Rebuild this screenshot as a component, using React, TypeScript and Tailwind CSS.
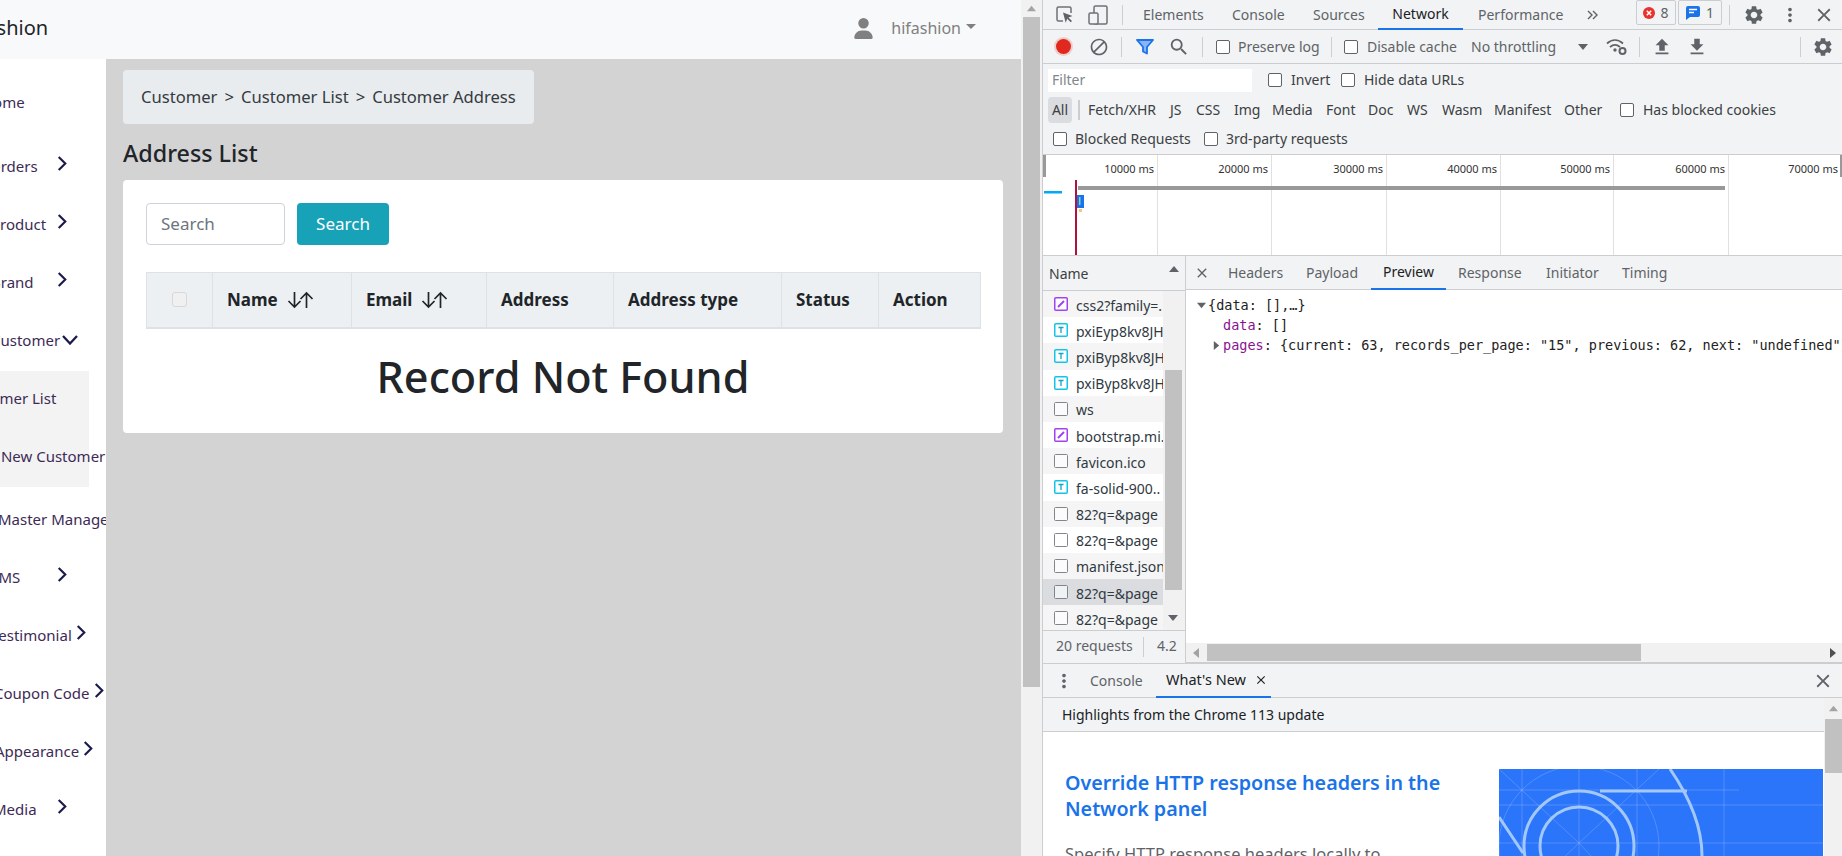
import type { ReactNode } from "react";
import { MdBlock, MdClose, MdFileDownload, MdFileUpload, MdMoreVert, MdSearch, MdSettings } from "react-icons/md";

function Tri({ dir, className }: { dir: "up" | "down" | "left" | "right"; className?: string }) {
  const pts = {
    up: "0,8 5,2 10,8",
    down: "0,2 5,8 10,2",
    left: "8,0 2,5 8,10",
    right: "2,0 8,5 2,10",
  }[dir];
  return (
    <svg viewBox="0 0 10 10" className={className}>
      <polygon points={pts} fill="currentColor" />
    </svg>
  );
}

function ChevronRight({ className }: { className?: string }) {
  return (
    <svg viewBox="0 0 10 16" className={"h-[15px] w-[10px] shrink-0 text-[#1a1a4d] " + (className ?? "")}>
      <polyline points="1.5,1 8.5,8 1.5,15" fill="none" stroke="currentColor" strokeWidth="2.3" />
    </svg>
  );
}

function SortArrows() {
  return (
    <svg viewBox="0 0 27 18" className="ml-[8px] h-[18px] w-[28px]">
      <g fill="none" stroke="#212529" strokeWidth="1.7">
        <path d="M8 1v15M2 10l6 6 6-6" />
        <path d="M20 17V2M14 8l6-6 6 6" />
      </g>
    </svg>
  );
}

const navTop = [
  { label: "Orders", offset: "-ml-[11px]" },
  { label: "Product", offset: "-ml-[9px]" },
  { label: "Brand", offset: "-ml-[9px]" },
];

const navBottom = [
  { label: "CMS", offset: "-ml-[11px]" },
  { label: "Testimonial", offset: "-ml-[9px]" },
  { label: "Coupon Code", offset: "-ml-[6px]" },
  { label: "Appearance", offset: "-ml-[5px]" },
  { label: "Media", offset: "-ml-[7px]" },
  { label: "Settings", offset: "-ml-[7px]" },
];

function NavRow({ label, offset }: { label: string; offset: string }) {
  return (
    <div className="flex h-[58px] items-center whitespace-nowrap">
      <div className="min-w-[53px]">
        <div className={offset}>{label}</div>
      </div>
      <ChevronRight className="mb-[6px] ml-[4px]" />
    </div>
  );
}

function Sidebar() {
  return (
    <aside className="h-full w-[106px] shrink-0 overflow-hidden bg-white pt-[14px] text-[15px] text-[#3d2b56]">
      <div className="mb-[6px] -ml-[18px] flex h-[58px] items-center">Home</div>
      {navTop.map((n) => (
        <NavRow key={n.label} {...n} />
      ))}
      <div className="flex h-[58px] items-center whitespace-nowrap">
        <span className="-ml-[9px]">Customer</span>
        <svg viewBox="0 0 16 10" className="ml-[2px] h-[10px] w-[16px] shrink-0 text-[#1a1a4d]">
          <polyline points="1,1 8,8.5 15,1" fill="none" stroke="currentColor" strokeWidth="2.3" />
        </svg>
      </div>
      <div className="mt-[2px] w-[89px] bg-[#f3f3f3] whitespace-nowrap">
        <div className="flex h-[58px] items-center pb-[4px]">
          <span className="-ml-[41px]">Customer List</span>
        </div>
        <div className="flex h-[58px] items-center pb-[4px]">
          <span className="-ml-[31px]">Add New Customer</span>
        </div>
      </div>
      <div className="mt-[3px] flex h-[58px] items-center whitespace-nowrap">
        <span className="-ml-[2px]">Master Management</span>
      </div>
      {navBottom.map((n) => (
        <NavRow key={n.label} {...n} />
      ))}
    </aside>
  );
}

function PageContent() {
  return (
    <main className="h-full min-w-0 flex-1 bg-[#d3d3d3] pt-[11px] pl-[17px]">
      <div className="flex h-[54px] w-[411px] items-center gap-[7px] rounded-[4px] bg-[#e9ecef] pl-[18px] text-[16.6px] text-[#343a40]">
        <span>Customer</span>
        <span>&gt;</span>
        <span>Customer List</span>
        <span>&gt;</span>
        <span>Customer Address</span>
      </div>
      <h2 className="mt-[13px] h-[43px] text-[23.3px] leading-[33px] font-medium text-[#212529]">Address List</h2>
      <section className="h-[253px] w-[880px] rounded-[4px] bg-white px-[23px] pt-[23px]">
        <div className="flex gap-[12px]">
          <div className="flex h-[42px] w-[139px] items-center rounded-[4px] border border-[#ced4da] pl-[14px] text-[17px] text-[#6c757d]">
            Search
          </div>
          <div className="flex h-[42px] w-[92px] items-center justify-center rounded-[4px] bg-[#17a2b8] text-[17px] text-white">
            Search
          </div>
        </div>
        <div className="mt-[27px] flex h-[57px] w-[835px] border border-b-2 border-[#dee2e6] bg-[#ecf0f2] text-[17px] font-bold text-[#212529]">
          <div className="flex w-[66px] items-center justify-center border-r border-[#dee2e6]">
            <div className="mr-[1px] mb-[1px] h-[15px] w-[15px] rounded-[3px] border border-[#d8d8d8] bg-[#f0f0f0]" />
          </div>
          <div className="flex w-[139px] items-center border-r border-[#dee2e6] pl-[14px]">
            Name
            <SortArrows />
          </div>
          <div className="flex w-[135px] items-center border-r border-[#dee2e6] pl-[14px]">
            Email
            <SortArrows />
          </div>
          <div className="flex w-[127px] items-center border-r border-[#dee2e6] pl-[14px]">Address</div>
          <div className="flex w-[168px] items-center border-r border-[#dee2e6] pl-[14px]">Address type</div>
          <div className="flex w-[97px] items-center border-r border-[#dee2e6] pl-[14px]">Status</div>
          <div className="flex flex-1 items-center pl-[14px]">Action</div>
        </div>
        <h1 className="mt-[21px] text-center text-[43.2px] leading-[53px] font-medium text-[#212529]">Record Not Found</h1>
      </section>
    </main>
  );
}

function PageScrollbar() {
  return (
    <div className="h-full w-[21px] shrink-0 bg-[#f1f1f1] pl-[2px]">
      <div className="flex h-[17px] w-[17px] items-center justify-center text-[#a3a3a3]">
        <Tri dir="up" className="h-[9px] w-[9px]" />
      </div>
      <div className="h-[670px] w-[17px] bg-[#c1c1c1]" />
    </div>
  );
}

function Check({ className }: { className?: string }) {
  return <div className={"h-[14px] w-[14px] shrink-0 rounded-[2px] border border-[#5f6368] bg-white " + (className ?? "")} />;
}

function Sep({ className }: { className?: string }) {
  return <div className={"h-[20px] w-px shrink-0 bg-[#ccced2] " + (className ?? "")} />;
}

function MainTabs() {
  return (
    <div className="flex h-[30px] shrink-0 items-center border-b border-[#cbcdd1] text-[14px] text-[#5f6368]">
      <svg viewBox="0 0 17 17" className="ml-[13px] h-[17px] w-[17px]">
        <path d="M7 15H2.5A1.5 1.5 0 0 1 1 13.5v-11A1.5 1.5 0 0 1 2.5 1h11A1.5 1.5 0 0 1 15 2.500V7" fill="none" stroke="#6e7175" strokeWidth="1.5" />
        <path d="M7 6.500l9.500 3.500-4 1.500 3.500 3.500-1.300 1.300-3.500-3.500-1.500 4z" fill="#5f6368" />
      </svg>
      <svg viewBox="0 0 20 20" className="ml-[15px] h-[20px] w-[20px]">
        <rect x="6" y="1" width="13" height="18" rx="1.500" fill="none" stroke="#6e7175" strokeWidth="1.500" />
        <rect x="1" y="8" width="9" height="11" rx="1.500" fill="#f1f3f4" stroke="#6e7175" strokeWidth="1.500" />
      </svg>
      <Sep className="ml-[14px]" />
      <div className="ml-[20px] w-[89px] pb-[1px]">Elements</div>
      <div className="w-[81px] pb-[1px]">Console</div>
      <div className="w-[65px] pb-[1px]">Sources</div>
      <div className="flex h-[30px] w-[85px] items-center justify-center border-b-2 border-[#1a73e8] pb-[1px] text-[#202124]">Network</div>
      <div className="ml-[15px] w-[109px] pb-[1px]">Performance</div>
      <svg viewBox="0 0 12 10" className="h-[10px] w-[12px]">
        <path d="M1 1l4 4-4 4M6 1l4 4-4 4" fill="none" stroke="#5f6368" strokeWidth="1.400" />
      </svg>
      <div className="ml-[37px] flex h-[25px] w-[40px] items-center justify-center gap-[5px] self-start rounded-[2px] border border-[#cbcdd1]">
        <svg viewBox="0 0 12 12" className="h-[12px] w-[12px]">
          <circle cx="6" cy="6" r="6" fill="#e8322b" />
          <path d="M3.800 3.800l4.400 4.400M8.200 3.800l-4.400 4.400" stroke="#fff" strokeWidth="1.500" />
        </svg>
        8
      </div>
      <div className="ml-[2px] flex h-[25px] w-[44px] items-center justify-center gap-[6px] self-start rounded-[2px] border border-[#cbcdd1]">
        <svg viewBox="0 0 14 14" className="h-[14px] w-[14px]">
          <path d="M2 0h10a2 2 0 0 1 2 2v7a2 2 0 0 1-2 2H4l-4 3V2a2 2 0 0 1 2-2z" fill="#1a73e8" />
          <path d="M3 3.500h8M3 6.500h5" stroke="#fff" strokeWidth="1.300" />
        </svg>
        1
      </div>
      <Sep className="ml-[7px]" />
      <MdSettings className="ml-[13px] h-[22px] w-[22px] text-[#5f6368]" />
      <MdMoreVert className="ml-[14px] h-[22px] w-[22px] text-[#5f6368]" />
      <MdClose className="ml-[12px] h-[22px] w-[22px] text-[#5f6368]" />
    </div>
  );
}

function NetToolbar() {
  return (
    <div className="flex h-[34px] shrink-0 items-center border-b border-[#cbcdd1] text-[14px] text-[#5f6368]">
      <div className="ml-[13px] h-[15px] w-[15px] shrink-0 rounded-full bg-[#e0281e] shadow-[0_0_0_2px_rgba(224,40,30,0.18)]" />
      <MdBlock className="ml-[18px] h-[20px] w-[20px] shrink-0 text-[#5f6368]" />
      <Sep className="ml-[12px]" />
      <svg viewBox="0 0 18 16" className="ml-[14px] h-[16px] w-[18px] shrink-0">
        <path d="M1 1h16l-6 7v6.500l-4-2V8z" fill="#8ab4f8" stroke="#1a73e8" strokeWidth="1.800" strokeLinejoin="round" />
      </svg>
      <MdSearch className="ml-[14px] h-[22px] w-[22px] shrink-0 text-[#5f6368]" />
      <Sep className="ml-[12px]" />
      <Check className="ml-[13px]" />
      <div className="ml-[8px] w-[93px] shrink-0">Preserve log</div>
      <Sep />
      <Check className="ml-[12px]" />
      <div className="ml-[9px] w-[104px] shrink-0">Disable cache</div>
      <div className="w-[103px] shrink-0">No throttling</div>
      <Tri dir="down" className="ml-[4px] h-[10px] w-[10px] shrink-0" />
      <svg viewBox="0 0 22 17" className="ml-[18px] h-[17px] w-[22px] shrink-0">
        <g fill="none" stroke="#5f6368" strokeWidth="1.800">
          <path d="M1 5.500C6 1 12 1 17 5.500" />
          <path d="M4 9c3.500-3 6.500-3 10 0" />
        </g>
        <circle cx="9" cy="12" r="1.700" fill="#5f6368" />
        <circle cx="16.500" cy="13" r="3" fill="none" stroke="#5f6368" strokeWidth="2" />
      </svg>
      <Sep className="ml-[11px]" />
      <MdFileUpload className="ml-[11px] h-[22px] w-[22px] shrink-0 text-[#5f6368]" />
      <MdFileDownload className="ml-[13px] h-[22px] w-[22px] shrink-0 text-[#5f6368]" />
      <Sep className="ml-[92px]" />
      <MdSettings className="ml-[11px] h-[22px] w-[22px] shrink-0 text-[#5f6368]" />
    </div>
  );
}

const filterTypes: [string, string][] = [
  ["Fetch/XHR", "w-[82px]"],
  ["JS", "w-[26px]"],
  ["CSS", "w-[38px]"],
  ["Img", "w-[38px]"],
  ["Media", "w-[54px]"],
  ["Font", "w-[42px]"],
  ["Doc", "w-[39px]"],
  ["WS", "w-[35px]"],
  ["Wasm", "w-[52px]"],
  ["Manifest", "w-[70px]"],
  ["Other", "w-[56px]"],
];

function FilterBar() {
  return (
    <div className="h-[91px] shrink-0 border-b border-[#cbcdd1] text-[14px] text-[#3c4043]">
      <div className="flex h-[32px] items-center pl-[5px]">
        <div className="flex h-[23px] w-[204px] items-center bg-white pb-[1px] pl-[4px] text-[#80868b]">Filter</div>
        <Check className="ml-[16px]" />
        <div className="ml-[9px] w-[50px] pb-[1px]">Invert</div>
        <Check />
        <div className="ml-[9px] pb-[1px]">Hide data URLs</div>
      </div>
      <div className="flex h-[27px] items-center pl-[5px]">
        <div className="flex h-[26px] w-[24px] items-center justify-center rounded-[4px] bg-[#dadce0]">All</div>
        <div className="mx-[6px] h-[20px] w-[2px] bg-[#cbcdd1]" />
        <div className="ml-[2px] flex">
          {filterTypes.map(([t, w]) => (
            <div key={t} className={"whitespace-nowrap " + w}>
              {t}
            </div>
          ))}
        </div>
        <Check />
        <div className="ml-[9px]">Has blocked cookies</div>
      </div>
      <div className="flex h-[31px] items-center pl-[10px]">
        <Check />
        <div className="ml-[8px] w-[129px]">Blocked Requests</div>
        <Check />
        <div className="ml-[8px]">3rd-party requests</div>
      </div>
    </div>
  );
}

const ticks: [string, string][] = [
  ["10000 ms", "w-[115px]"],
  ["20000 ms", "w-[114px]"],
  ["30000 ms", "w-[115px]"],
  ["40000 ms", "w-[114px]"],
  ["50000 ms", "w-[113px]"],
  ["60000 ms", "w-[115px]"],
];

function Overview() {
  return (
    <div className="relative flex h-[101px] shrink-0 border-b border-[#cbcdd1] bg-white text-[11px] leading-[16px] text-[#333]">
      {ticks.map(([t, w]) => (
        <div key={t} className={"h-full border-r border-[#e0e0e0] pt-[6px] pr-[3px] text-right " + w}>
          {t}
        </div>
      ))}
      <div className="flex-1 pt-[6px] pr-[4px] text-right">70000 ms</div>
      <svg viewBox="0 0 799 100" className="absolute top-0 left-0 h-[100px] w-[799px]">
        <rect x="0" y="0" width="3" height="22" fill="#999" />
        <rect x="797" y="0" width="2" height="22" fill="#999" />
        <rect x="1" y="36" width="18" height="2.500" fill="#03a9f4" />
        <rect x="35" y="31" width="647" height="4" fill="#999" />
        <rect x="33" y="40" width="8" height="13" fill="#1a73e8" />
        <rect x="36" y="42" width="1.500" height="8" fill="#7fd6c2" />
        <rect x="36" y="54" width="3" height="3" fill="#f6c77a" />
        <rect x="32" y="25" width="2" height="75" fill="#b0123b" />
      </svg>
    </div>
  );
}

function FileIcon({ type }: { type: "css" | "font" | "doc" }) {
  if (type === "css") {
    return (
      <svg viewBox="0 0 14 14" className="h-[14px] w-[14px] shrink-0">
        <rect x=".75" y=".75" width="12.500" height="12.500" rx="1" fill="#fff" stroke="#a142f4" strokeWidth="1.500" />
        <path d="M4 10l6-6" stroke="#a142f4" strokeWidth="2" />
      </svg>
    );
  }
  if (type === "font") {
    return (
      <svg viewBox="0 0 14 14" className="h-[14px] w-[14px] shrink-0">
        <rect x=".75" y=".75" width="12.500" height="12.500" rx="1" fill="#fff" stroke="#12c5e8" strokeWidth="1.500" />
        <path d="M4.500 4.500h5M7 4.500v5.500" stroke="#12a5c8" strokeWidth="1.300" />
      </svg>
    );
  }
  return (
    <svg viewBox="0 0 14 14" className="h-[14px] w-[14px] shrink-0">
      <rect x=".5" y=".5" width="13" height="13" rx="1" fill="#fff" fillOpacity=".6" stroke="#80868b" />
    </svg>
  );
}

const requests: { name: string; type: "css" | "font" | "doc" }[] = [
  { name: "css2?family=.", type: "css" },
  { name: "pxiEyp8kv8JH", type: "font" },
  { name: "pxiByp8kv8JH", type: "font" },
  { name: "pxiByp8kv8JH", type: "font" },
  { name: "ws", type: "doc" },
  { name: "bootstrap.mi.", type: "css" },
  { name: "favicon.ico", type: "doc" },
  { name: "fa-solid-900..", type: "font" },
  { name: "82?q=&page", type: "doc" },
  { name: "82?q=&page", type: "doc" },
  { name: "manifest.json", type: "doc" },
  { name: "82?q=&page", type: "doc" },
  { name: "82?q=&page", type: "doc" },
];

function NamePanel() {
  return (
    <div className="flex h-full w-[143px] shrink-0 flex-col border-r border-[#cbcdd1] text-[14px]">
      <div className="flex h-[35px] shrink-0 items-center justify-between border-b border-[#cbcdd1] pr-[6px] pl-[6px] text-[#3c4043]">
        <span className="pt-[1px]">Name</span>
        <Tri dir="up" className="mb-[8px] h-[10px] w-[10px] text-[#5f6368]" />
      </div>
      <div className="flex h-[339px] shrink-0 overflow-hidden">
        <div className="w-[120px] shrink-0">
          {requests.map((r, i) => (
            <div
              key={i}
              className={
                "flex h-[26.2px] items-center gap-[8px] overflow-hidden pl-[11px] whitespace-nowrap text-[#303942] " +
                (i === 11 ? "bg-[#dadce0]" : i % 2 === 0 ? "bg-[#f5f5f5]" : "bg-white")
              }
            >
              <FileIcon type={r.type} />
              <span className="pt-[2px]">{r.name}</span>
            </div>
          ))}
        </div>
        <div className="relative flex-1 bg-[#f1f1f1]">
          <div className="mt-[79px] ml-[2px] h-[220px] w-[17px] bg-[#c1c1c1]" />
          <Tri dir="down" className="absolute top-[322px] left-[5px] h-[10px] w-[10px] text-[#5f6368]" />
        </div>
      </div>
      <div className="flex h-[33px] flex-1 items-center overflow-hidden border-t border-[#cbcdd1] pl-[13px] whitespace-nowrap text-[#5f6368]">
        <div className="w-[87px] shrink-0 pb-[3px]">20 requests</div>
        <Sep />
        <div className="ml-[13px] w-[24px] shrink-0 overflow-hidden pb-[3px]">4.2 MB</div>
      </div>
    </div>
  );
}

function Key({ children }: { children: ReactNode }) {
  return <span className="text-[#881391]">{children}</span>;
}

function DetailPanel() {
  return (
    <div className="flex h-full min-w-0 flex-1 flex-col">
      <div className="flex h-[34px] shrink-0 items-center border-b border-[#cbcdd1] text-[14px] text-[#5f6368]">
        <MdClose className="ml-[8px] h-[16px] w-[16px] shrink-0" />
        <div className="ml-[18px] w-[78px]">Headers</div>
        <div className="w-[65px]">Payload</div>
        <div className="flex h-[34px] w-[75px] items-center justify-center border-b-2 border-[#1a73e8] text-[#202124]">Preview</div>
        <div className="ml-[12px] w-[88px]">Response</div>
        <div className="w-[76px]">Initiator</div>
        <div>Timing</div>
      </div>
      <div className="min-w-0 flex-1 overflow-hidden bg-white pt-[5px] font-['DejaVu_Sans_Mono'] text-[13.5px] leading-[20px] whitespace-pre text-[#222]">
        <div className="flex items-center pl-[11px]">
          <Tri dir="down" className="mr-[2px] h-[9px] w-[9px] shrink-0 text-[#5f6368]" />
          {"{data: [],…}"}
        </div>
        <div className="pl-[37px]">
          <Key>data</Key>: []
        </div>
        <div className="flex items-center pl-[26px]">
          <Tri dir="right" className="mr-[2px] h-[9px] w-[9px] shrink-0 text-[#5f6368]" />
          <span>
            <Key>pages</Key>
            {': {current: 63, records_per_page: "15", previous: 62, next: "undefined"}'}
          </span>
        </div>
      </div>
      <div className="flex h-[20px] shrink-0 items-center border-b border-[#cbcdd1] bg-[#f1f1f1]">
        <Tri dir="left" className="ml-[5px] h-[10px] w-[10px] text-[#a3a3a3]" />
        <div className="ml-[6px] h-[17px] w-[434px] bg-[#c1c1c1]" />
        <div className="flex-1" />
        <Tri dir="right" className="mr-[4px] h-[10px] w-[10px] text-[#505050]" />
      </div>
    </div>
  );
}

function Blueprint() {
  return (
    <svg viewBox="0 0 324 87" className="h-[87px] w-[324px] shrink-0 bg-[#2b75fb]">
      <g fill="none" stroke="#ffffff" strokeOpacity=".18" strokeWidth="1">
        <path d="M23 0v87M80 0v87M138 0v87M225 0v87M0 21h240M0 36h324M0 74h324" />
        <path d="M0 0L80 74L160 160M160 0L80 74L0 150" />
        <circle cx="80" cy="77" r="80" />
      </g>
      <g fill="none" stroke="#a3c8fb" strokeWidth="3">
        <circle cx="80" cy="77" r="55" />
        <circle cx="80" cy="77" r="39" />
        <path d="M101 22h87" />
        <path d="M171 0c18 26 32 56 32 87" />
        <path d="M0 48l24 36" />
      </g>
    </svg>
  );
}

function Drawer() {
  return (
    <div className="flex h-[192px] shrink-0 flex-col text-[14px]">
      <div className="flex h-[34px] shrink-0 items-center border-b border-[#cbcdd1] text-[#5f6368]">
        <MdMoreVert className="ml-[10px] h-[22px] w-[22px] shrink-0" />
        <div className="ml-[15px] w-[66px]">Console</div>
        <div className="flex h-[34px] w-[115px] items-center gap-[8px] border-b-2 border-[#1a73e8] pl-[10px] text-[14.5px] text-[#202124]">
          What's New
          <MdClose className="h-[14px] w-[14px] shrink-0" />
        </div>
        <div className="flex-1" />
        <MdClose className="mr-[8px] h-[22px] w-[22px] shrink-0" />
      </div>
      <div className="flex min-h-0 flex-1">
        <div className="flex w-[781px] shrink-0 flex-col">
          <div className="flex h-[34px] shrink-0 items-center border-b border-[#cbcdd1] pl-[19px] text-[#202124]">
            Highlights from the Chrome 113 update
          </div>
          <div className="flex min-h-0 flex-1 overflow-hidden bg-white pl-[22px]">
            <div className="w-[434px] shrink-0 pt-[38px]">
              <div className="w-[385px] text-[19.7px] leading-[26px] font-semibold text-[#1a73e8]">
                Override HTTP response headers in the Network panel
              </div>
              <div className="mt-[21px] text-[16.5px] leading-[22px] whitespace-nowrap text-[#5f6368]">
                Specify HTTP response headers locally to
              </div>
            </div>
            <div className="mt-[37px]">
              <Blueprint />
            </div>
          </div>
        </div>
        <div className="flex-1 bg-[#f1f1f1] pl-[1px]">
          <div className="flex h-[21px] items-center justify-center text-[#a3a3a3]">
            <Tri dir="up" className="h-[9px] w-[9px]" />
          </div>
          <div className="h-[54px] w-[17px] bg-[#c1c1c1]" />
        </div>
      </div>
    </div>
  );
}

function DevTools() {
  return (
    <div className="flex h-full min-w-0 flex-1 flex-col overflow-hidden border-l border-[#cbcdd1] bg-[#f1f3f4]">
      <MainTabs />
      <NetToolbar />
      <FilterBar />
      <Overview />
      <div className="flex h-[408px] shrink-0 border-b border-[#cbcdd1]">
        <NamePanel />
        <DetailPanel />
      </div>
      <Drawer />
    </div>
  );
}

export default function App() {
  return (
    <div className="flex h-[856px] w-[1842px] overflow-hidden bg-white font-['Noto_Sans',sans-serif]">
      <div className="flex h-full w-[1021px] shrink-0 flex-col">
        <header className="flex h-[59px] shrink-0 items-center bg-[#f8f9fa]">
          <span className="-ml-[39px] pb-[3px] text-[20px] text-[#212529]">hifashion</span>
          <div className="flex-1" />
          <svg viewBox="0 0 448 512" className="mb-[3px] h-[21px] w-[19px] text-[#808080]">
            <path
              fill="currentColor"
              d="M224 256a128 128 0 1 0 0-256 128 128 0 1 0 0 256zm-45.700 48C79.800 304 0 383.800 0 482.300 0 498.700 13.300 512 29.700 512h388.600c16.400 0 29.700-13.300 29.700-29.700C448 383.800 368.200 304 269.700 304h-91.400z"
            />
          </svg>
          <span className="ml-[18px] pb-[3px] text-[16px] text-[#808080]">hifashion</span>
          <div className="mt-[-6px] ml-[5px] h-0 w-0 border-x-[5px] border-t-[5px] border-x-transparent border-t-[#808080]" />
          <div className="w-[45px]" />
        </header>
        <div className="flex min-h-0 flex-1">
          <Sidebar />
          <PageContent />
        </div>
      </div>
      <PageScrollbar />
      <DevTools />
    </div>
  );
}
